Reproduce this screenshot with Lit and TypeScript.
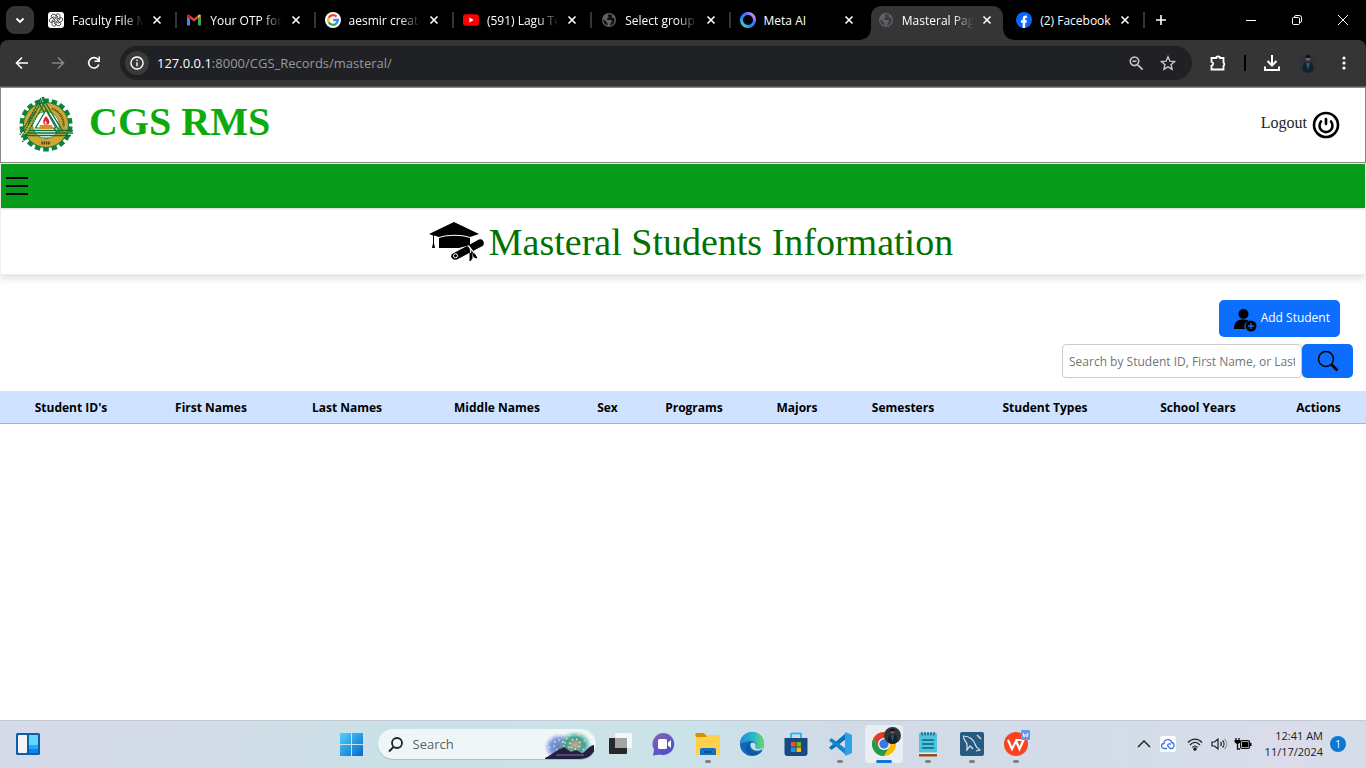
import { LitElement, html, svg, css } from "lit";
import { customElement } from "lit/decorators.js";
import { classMap } from "lit/directives/class-map.js";

const rays = (n: number) => Array.from({ length: n }, (_, i) => (i * 360) / n);

const globe = svg`<circle cx="8" cy="8" r="7" fill="#5f6368"/>
  <path d="M8 2.300c-1.500.6-1.700 1.700-.7 2.300s.2 1.500-.9 1.700c-1.200.3-.6 1.700.6 1.700h2.500c1.500.2 2 1.700.8 2.500-.9.600-.6 2-1.600 3.300 5-.6 6-6 3.800-8.200-1.300.5-2.200-.5-1.500-1.500.5-.9-.9-1.900-3-1.800zM2.200 7.600c-.1 3 1.500 5 4 5.900.6-1.700.5-2.700-.8-3.200C4.600 9.900 5 9 4.200 8.600z" fill="var(--tab-bg,#000)" opacity=".85"/>`;

const person = svg`<circle cx="10" cy="10" r="10" fill="#30343a"/>
  <path d="M4.500 17.500c-.3-5 1-8.500 4-9l1.500 1 1.500-1c3 .5 4.300 4 4 9-3 3-8 3-11 0z" fill="#12222d"/>
  <path d="M7.500 9l2.500 8 2.500-8-2.500 1z" fill="#29566a"/><circle cx="10" cy="5.500" r="2.300" fill="#80614f"/><path d="M7.300 5c0-4.500 5.400-4.500 5.400 0z" fill="#101318"/>`;

const favicons: Record<string, unknown> = {
  gpt: svg`<rect width="16" height="16" rx="3" fill="#fff"/>
    <g fill="none" stroke="#333" stroke-width=".8">${rays(6).map(a => svg`<path transform="rotate(${a} 8 8)" d="M8 6V3.600a2 2 0 0 1 4 .3v3.300L8.800 9"/>`)}</g>`,
  gmail: svg`<path d="M1 4v9.500h3V7z" fill="#4285f4"/><path d="M15 4v9.500h-3V7z" fill="#34a853"/>
    <path d="M1 4.200 8 9.600l7-5.400-1.700-1.700L8 6.400 2.700 2.500z" fill="#ea4335"/><path d="M12 6.500V3.200c1.400-1.300 3-.6 3 1.100z" fill="#fbbc04"/><path d="M4 6.500V3.200C2.600 1.900 1 2.600 1 4.300z" fill="#c5221f"/>`,
  google: svg`<circle cx="8" cy="8" r="8" fill="#fff"/><g fill="none" stroke-width="2.300">
    <path d="M11.600 4.600A4.900 4.900 0 0 0 3.700 5.700" stroke="#ea4335"/><path d="M3.700 5.700a5 5 0 0 0 0 4.600" stroke="#fbbc05"/>
    <path d="M3.700 10.300a4.900 4.900 0 0 0 7.500 1.300" stroke="#34a853"/><path d="M8.200 8h4.700a5 5 0 0 1-1.700 3.600" stroke="#4285f4"/></g>`,
  youtube: svg`<rect y="2.300" width="16" height="11.400" rx="3" fill="#f00"/><path d="M6.400 5.600v4.800L10.600 8z" fill="#fff"/>`,
  globe,
  meta: svg`<defs><linearGradient id="mt" x1="0" y1="1" x2="1" y2="0"><stop offset="0" stop-color="#5ef0c0"/><stop offset=".35" stop-color="#1789ff"/><stop offset=".65" stop-color="#5668ff"/><stop offset="1" stop-color="#f9a0e8"/></linearGradient></defs>
    <circle cx="8" cy="8" r="6.500" fill="none" stroke="url(#mt)" stroke-width="3"/>`,
  facebook: svg`<circle cx="8" cy="8" r="8" fill="#0866ff"/><path d="M6.700 16v-5.300H5V8.200h1.700V7c0-2.700 1.400-3.700 4.200-3.300v2.200C9.600 5.800 9.200 6 9.200 7v1.200h1.700l-.4 2.500H9.200V16z" fill="#fff"/>`,
};

const tabs = [
  { icon: "gpt", title: "Faculty File M", fade: true },
  { icon: "gmail", title: "Your OTP for", fade: true },
  { icon: "google", title: "aesmir creatu", fade: true },
  { icon: "youtube", title: "(591) Lagu Te", fade: true },
  { icon: "globe", title: "Select group", fade: true },
  { icon: "meta", title: "Meta AI" },
  { icon: "globe", title: "Masteral Pag", fade: true, active: true },
  { icon: "facebook", title: "(2) Facebook" },
];

const line = (size: number, d: string, w = 1.8) => html`<svg width=${size} height=${size} viewBox="0 0 ${size} ${size}" fill="none" stroke="currentColor" stroke-width=${w} aria-hidden="true"><path d=${d}/></svg>`;

@customElement("browser-chrome")
class BrowserChrome extends LitElement {
  static styles = css`
    :host { display: block; background: #000; color: #fff; font-family: "Open Sans", "Noto Sans", sans-serif; }
    button { border: 0; padding: 0; background: none; color: inherit; display: grid; place-items: center; flex: none; }
    svg { display: block; }
    .strip { display: flex; height: 40px; }
    .list { width: 28px; height: 28px; margin: 6px 5px 0 6px; border-radius: 9px; background: #353535; }
    .tabs { display: grid; grid-template-columns: repeat(8, minmax(0, 1fr)); flex: 0 1 81%; padding-top: 6px; }
    .tab { position: relative; display: flex; align-items: center; margin: 0 4px 0 2px; padding: 0 8px 6px 7px; border-radius: 10px 10px 0 0; font-size: 12px; }
    .favicon { flex: none; margin-right: 8px; }
    .title { flex: 1; min-width: 0; white-space: nowrap; }
    .title.fade { mask-image: linear-gradient(90deg, #000 70%, transparent 98%); }
    .close { width: 16px; height: 16px; margin-left: 4px; }
    .tab::after { content: ""; position: absolute; right: -4px; top: 6px; width: 2px; height: 16px; background: #353535; }
    .tab.before::after { display: none; }
    .tab.active { background: #353535; --tab-bg: #353535; }
    .tab.active::before, .tab.active::after { content: ""; position: absolute; top: auto; bottom: 0; width: 10px; height: 10px; }
    .tab.active::before { left: -10px; background: radial-gradient(circle at 0 0, transparent 9px, #353535 10px); }
    .tab.active::after { right: -10px; background: radial-gradient(circle at 100% 0, transparent 9px, #353535 10px); }
    .new { width: 32px; height: 40px; }
    .win { width: 46px; height: 40px; }
    .grow { flex: 1; }
    .bar { display: flex; align-items: center; height: 46px; background: #353535; border-radius: 8px 8px 0 0; padding: 0 4px; border-bottom: 1px solid #5b5b5b; }
    .nav { width: 36px; height: 36px; }
    .dim { color: #858585; }
    .omni { flex: 1; min-width: 0; display: flex; align-items: center; height: 34px; margin: 0 8px; padding: 0 8px 0 5px; border-radius: 17px; background: #202124; }
    .info { width: 24px; height: 24px; border-radius: 50%; background: #3a3a3b; margin-right: 8px; }
    .url { flex: 1; font-size: 13px; line-height: 20px; color: #9a9a9a; outline: none; }
    .host { color: #fff; }
    .tool { width: 32px; height: 32px; color: #c7c7c7; }
    .sep { width: 2px; height: 16px; background: #000; margin: 0 8px; }
    .ext { width: 36px; height: 36px; }
  `;
  render() {
    return html`
      <div class="strip">
        <button class="list" aria-label="Search tabs">${line(12, "M2.500 4.500 6 8l3.500-3.500")}</button>
        <div class="tabs">
          ${tabs.map((t, i) => html`<div class=${classMap({ tab: true, active: !!t.active, before: !!tabs[i + 1]?.active })}>
            <svg class="favicon" width="16" height="16" viewBox="0 0 16 16" aria-hidden="true">${favicons[t.icon]}</svg>
            <span class=${classMap({ title: true, fade: !!t.fade })}>${t.title}</span>
            <button class="close" aria-label="Close tab">${line(10, "M1.500 1.500l7 7M8.500 1.500l-7 7", 1.6)}</button>
          </div>`)}
        </div>
        <button class="new" aria-label="New tab">${line(12, "M6 1v10M1 6h10", 1.6)}</button>
        <span class="grow"></span>
        <button class="win" aria-label="Minimize">${line(10, "M0 5.500h10", 1)}</button>
        <button class="win" aria-label="Restore">${line(10, "M2.500 2.500V2A1.500 1.500 0 0 1 4 .5h3.500a2 2 0 0 1 2 2V6A1.500 1.500 0 0 1 8 7.500M1.500 2.500h5a1 1 0 0 1 1 1v5a1 1 0 0 1-1 1h-5a1 1 0 0 1-1-1v-5a1 1 0 0 1 1-1z", 1)}</button>
        <button class="win" aria-label="Close">${line(10, "M0 0l10 10M10 0 0 10", 1)}</button>
      </div>
      <div class="bar">
        <button class="nav" aria-label="Back">${line(16, "M14 8H3M8 2.500 2.500 8 8 13.500", 1.6)}</button>
        <button class="nav dim" aria-label="Forward">${line(16, "M2 8h11M8 2.500 13.500 8 8 13.500", 1.6)}</button>
        <button class="nav" aria-label="Reload">${line(16, "M12.800 9.500A5.200 5.200 0 1 1 11.700 4.300L13 5.700M13.200 1.500v4.800H8.600", 1.6)}</button>
        <div class="omni">
          <button class="info" aria-label="Site information">${line(14, "M7 1a6 6 0 1 0 .01 0zM7 6.200v4M7 3.500v1.600", 1.4)}</button>
          <div class="url" role="textbox" aria-label="Address" contenteditable="true" spellcheck="false"><span class="host">127.0.0.1</span>:8000/CGS_Records/masteral/</div>
          <button class="tool" aria-label="Zoom">${line(16, "M6.500 2a4.300 4.300 0 1 0 .01 0zM9.600 9.600l5 5M4.500 6.300h4", 1.6)}</button>
          <button class="tool" aria-label="Bookmark">${line(16, "M8 1.800l1.900 4.400 4.700.4-3.600 3.100 1.100 4.700L8 11.900l-4.100 2.500L5 9.700 1.400 6.600l4.700-.4z", 1.4)}</button>
        </div>
        <button class="ext" aria-label="Extensions">${line(18, "M2.500 4H7a2 1.500 0 0 1 4 0h3.500v4.500a1.500 2 0 0 1 0 3.500v3.500h-12v-3.800c2.200-.3 2.200-3.600 0-3.900z", 1.8)}</button>
        <span class="sep"></span>
        <button class="ext" aria-label="Downloads">${line(18, "M9 1v10M4.500 7 9 11.500 13.500 7M2 12.500V16h14v-3.500", 2)}</button>
        <button class="ext" aria-label="Profile"><svg width="20" height="20" viewBox="0 0 20 20" aria-hidden="true">${person}</svg></button>
        <button class="ext" aria-label="Menu"><svg width="16" height="16" fill="currentColor" aria-hidden="true"><circle cx="8" cy="3" r="1.600"/><circle cx="8" cy="8" r="1.600"/><circle cx="8" cy="13" r="1.600"/></svg></button>
      </div>`;
  }
}

const seal = html`<svg width="56" height="58" viewBox="0 0 56 58" aria-hidden="true">
  <g fill="#0e8239">${rays(18).map(a => svg`<rect x="25.200" y="2.500" width="5.600" height="6" transform="rotate(${a} 28 29)"/>`)}</g>
  <circle cx="28" cy="29" r="23" fill="#0e8239"/><circle cx="28" cy="29" r="22" fill="#d2a632"/>
  <circle cx="28" cy="29" r="13.500" fill="#fff" stroke="#0e8239" stroke-width=".8"/>
  <g fill="none" stroke="#4c4016" stroke-width="2.200" stroke-dasharray="1 .7"><path d="M11 28A17 17 0 0 1 18 15.500"/><path d="M34 12.500A17.500 17.500 0 0 1 45.500 31"/></g>
  <path d="M23.500 47h9" stroke="#4c4016" stroke-width="3" stroke-dasharray="1.500 .7"/>
  <path d="M22 3 42 36M24 1 45 35.500M20 6l19 31" stroke="#0e7236" stroke-width="1.400"/>
  <path d="M26 1 3 42M28 4 4.500 46M23 2 2 39" stroke="#0e7236" stroke-width="1.400" stroke-dasharray="2 .6"/>
  <path d="M11 34.500h44M9 37h46M7 39.500h46" stroke="#0e7236" stroke-width="1.500"/>
  <path d="M28 14 17.500 32h20.500z" fill="#fff" stroke="#0e7236" stroke-width="1.200"/>
  <path d="M28 20c-3 3-3.500 6-2 8.500h4.500c1.500-2 1-4-.5-6z" fill="#e3262c"/><path d="M27.500 24.500l-1 3h2.500z" fill="#fff"/><path d="M22 29h12l1 4H21z" fill="#db8a2d"/>
  <path d="M26 42h5" stroke="#555" stroke-dasharray="1 .5"/>
</svg>`;

const gradCap = html`<svg width="56" height="42" viewBox="0 0 56 42" aria-hidden="true">
  <path d="M0 13 25 1l25 12-9 3C32 13 19 13 10 16l-5-1.500V22l1 5H3l1-5v-7.500z"/>
  <path d="M10 17c9-3 22-3 31 0v7L30 27H10z"/>
  <path d="M23 33 50 18.500c4-1.500 6.500 4 3.500 6.500L28 38.500c-5 1-7-3-5-5.500z"/>
  <path d="M41 29v11l2-2.500V29zM43 29l5 8-3-1z" stroke="#000"/>
  <path d="M39.500 24.500l6 8M38.500 25c2 0 4 4 3 7" fill="none" stroke="#fff" stroke-width="1.200"/><circle cx="26.500" cy="34.800" r="2" fill="none" stroke="#fff"/>
</svg>`;

// Column shares follow the space each heading is given across the window.
const columns: [string, number][] = [
  ["Student ID's", 142], ["First Names", 138], ["Last Names", 134], ["Middle Names", 166], ["Sex", 55], ["Programs", 118],
  ["Majors", 88], ["Semesters", 124], ["Student Types", 160], ["School Years", 146], ["Actions", 95],
];
const total = columns.reduce((s, c) => s + c[1], 0);

@customElement("records-page")
class RecordsPage extends LitElement {
  static styles = css`
    :host { display: block; background: #fff; color: #000; font-family: "Open Sans", "Noto Sans", sans-serif; font-size: 12px; }
    svg { display: block; }
    .head { display: flex; align-items: center; justify-content: space-between; height: 74px; border: 1px solid #8b8585; padding: 0 25px 0 17px; font-family: "Liberation Serif", serif; }
    .brand { display: flex; align-items: center; gap: 15px; }
    .name { margin: 0; font-size: 40px; line-height: 46px; padding-bottom: 6px; color: #0aab0a; }
    .logout { display: flex; align-items: center; gap: 5px; font-size: 16px; color: #212529; text-decoration: none; }
    .word { padding-bottom: 4px; }
    .menu { display: flex; align-items: center; height: 44px; padding-left: 4px; background: #079b1b; border: 1px solid #eee8e8; }
    .burger { display: flex; padding: 0; border: 0; background: none; }
    .caption { display: flex; align-items: center; justify-content: center; gap: 4px; height: 64px; padding-left: 16px; border: 1px solid #eee; box-shadow: 0 3px 8px rgba(0,0,0,.14); font-family: "Liberation Serif", serif; }
    .caption h2 { margin: 0; font-size: 38px; line-height: 44px; font-weight: 400; color: #007000; }
    .tools { display: flex; flex-direction: column; align-items: flex-end; gap: 7px; padding: 25px 13px 13px; }
    .add { display: flex; align-items: center; gap: 4px; height: 37px; margin-right: 13px; padding: 0 10px 2px 14px; border: 0; border-radius: 5px; background: #0d6efd; color: #fff; font: inherit; }
    .add svg { margin-top: 5px; }
    .find { display: flex; }
    .query { width: 240px; height: 34px; box-sizing: border-box; border: 1px solid #ccc; border-radius: 4px; padding: 0 6px; font: inherit; }
    .query::placeholder { color: #757575; }
    .go { display: grid; place-items: center; width: 51px; height: 34px; border: 0; border-radius: 5px; padding: 0; background: #0d6efd; }
    .grid { width: 100%; table-layout: fixed; border-collapse: collapse; }
    .grid th { height: 30px; padding: 2px 0 0; background: #cfe2ff; border-bottom: 1px solid #a6b5cc; line-height: 20px; white-space: nowrap; }
  `;
  render() {
    return html`
      <header class="head">
        <div class="brand">${seal}<h1 class="name">CGS RMS</h1></div>
        <a class="logout" href="#"><span class="word">Logout</span>
          <svg width="28" height="28" viewBox="0 0 28 28" fill="none" stroke="#000" stroke-width="2.600" stroke-linecap="round" aria-hidden="true"><circle cx="14" cy="14" r="12"/><path d="M14 8v5M9 10.500a6.500 6.500 0 1 0 10 0"/></svg>
        </a>
      </header>
      <nav class="menu"><button class="burger" aria-label="Open menu"><svg width="24" height="20" stroke="#000" stroke-width="2" aria-hidden="true"><path d="M1 2h22M1 10h22M1 18h22"/></svg></button></nav>
      <div class="caption">${gradCap}<h2>Masteral Students Information</h2></div>
      <main>
        <div class="tools">
          <button class="add"><svg width="24" height="24" viewBox="0 0 24 24" aria-hidden="true"><circle cx="10.500" cy="6" r="5"/><path d="M1 21c0-7 3.500-9.500 9-9.500 2.500 0 4.500.5 6 1.500-4 1-5.500 4.500-3.800 8z"/><circle cx="18" cy="18" r="5.500"/><path d="M18 15v6M15 18h6" stroke="#0d6efd" stroke-width="1.400"/></svg>Add Student</button>
          <form class="find">
            <input class="query" type="text" aria-label="Search students" placeholder="Search by Student ID, First Name, or Last Name">
            <button class="go" type="button" aria-label="Search"><svg width="22" height="22" viewBox="0 0 22 22" fill="none" stroke="#000" aria-hidden="true"><circle cx="9" cy="9" r="7.500" stroke-width="1.500"/><path d="M14.500 14.500l6 6" stroke-width="2.600"/></svg></button>
          </form>
        </div>
        <table class="grid">
          <colgroup>${columns.map(([, w]) => html`<col style="width:${(w / total) * 100}%">`)}</colgroup>
          <thead><tr>${columns.map(([n]) => html`<th scope="col">${n}</th>`)}</tr></thead>
        </table>
      </main>`;
  }
}

const apps = [
  { name: "Task view", art: svg`<rect x="7" y="1" width="17" height="15" rx="1" fill="#f6f6f6"/><rect x="1" y="6" width="18" height="16" rx="1" fill="#282828"/><path d="M7 6h12v10H7z" fill="#a2a5a5"/>` },
  { name: "Chat", art: svg`<defs><linearGradient id="ch" x1="0" y1="0" x2=".7" y2="1"><stop stop-color="#8f62b4"/><stop offset="1" stop-color="#4b4fcb"/></linearGradient></defs><path d="M12 1a11 11 0 1 1-4 21.500L1 23.500l1-6A11 11 0 0 1 12 1z" fill="url(#ch)"/><rect x="6" y="7" width="9" height="10" rx="1.500" fill="#fff"/><path d="M16 10.500 19 8v8l-3-2.500z" fill="#fff"/>` },
  { name: "File Explorer", run: true, art: svg`<path d="M0 1.500h8l2.500 3H0z" fill="#d39100" stroke="#d39100"/><path d="M0 5h10l2-2h12v20H0z" fill="#ffd04a"/><path d="M4 23v-5q0-2 2-2h12q2 0 2 2v5z" fill="#1271c4"/><path d="M8 20h8" stroke="#0b4f93" stroke-width="2"/>` },
  { name: "Edge", art: svg`<defs><linearGradient id="ed"><stop stop-color="#2388dc"/><stop offset=".6" stop-color="#2bbcc7"/><stop offset="1" stop-color="#70da56"/></linearGradient></defs><circle cx="12" cy="12" r="12" fill="#1367ba"/><path d="M0 11C2-3 22-4 24 11c0 6-5 7-9 5 2-3 1-7-4-7-5 0-7 3-11 2z" fill="url(#ed)"/><path d="M10 11c-3 5 1 10 8 9l4-1c-6 8-18 4-15-5 .5-2 1.500-3 3-3z" fill="#1056a3"/><path d="M11 11c-2 4 2 8.500 8 7.500l3.500-1 1.500-4c-2 4-6 4-9 2.500 1.500-2 .5-5-1.500-5.500z" fill="#d0e0ea"/>` },
  { name: "Store", art: svg`<path d="M7 8V2.500q0-1 1-1h8q1 0 1 1V8" fill="none" stroke="#35b5f0" stroke-width="2"/><path d="M0.500 6h23v15q0 3-3 3h-17q-3 0-3-3z" fill="#174a83"/><path d="M7 10h4.500v4.500H7z" fill="#f25022"/><path d="M12.500 10H17v4.500h-4.500z" fill="#7fba00"/><path d="M7 15.500h4.500V20H7z" fill="#00a4ef"/><path d="M12.500 15.500H17V20h-4.500z" fill="#ffb900"/>` },
  { name: "Visual Studio Code", run: true, art: svg`<path d="M18 1 1 15.500 3.500 18 18 7z" fill="#0873b8"/><path d="M18 23 1 8.500 3.500 6 18 17z" fill="#1485ce"/><path d="M17 0l7 3v18l-7 3z" fill="#2ba3e8"/>` },
  { name: "Chrome", run: true, active: true, art: svg`<circle cx="12" cy="12" r="12" fill="#fbbc05"/><path d="M1.600 6A12 12 0 0 1 22.400 6H12L7 15z" fill="#df3c31"/><path d="M1.600 6A12 12 0 0 0 12 24l5-9-10 0z" fill="#249b4a"/><circle cx="12" cy="12" r="6" fill="#fff"/><circle cx="12" cy="12" r="4.700" fill="#3978e5"/><svg x="12" y="-5" width="17" height="17" viewBox="0 0 20 20">${person}</svg>` },
  { name: "Notepad", run: true, art: svg`<rect x="3" y="1" width="18" height="22" rx="1" fill="#4fc4df"/><path d="M3 22h18v2.500H3z" fill="#9a4c16"/><path d="M3 20.500h18V22H3z" fill="#eee"/><path d="M6 0v3.500M9 0v3.500M12 0v3.500M15 0v3.500M18 0v3.500" stroke="#126783" stroke-width="1.400"/><path d="M6 8h12M6 12h12M6 16h12" stroke="#12647d" stroke-width="1.500"/>` },
  { name: "MySQL Workbench", run: true, art: svg`<rect width="24" height="24" rx="2" fill="#275a80"/><path d="M3 4c7 0 11 4 13 10 0 2 4 3 4 4l-4 1M4 4c-2 2 2 5 3 8v6l3-4 3 3M17 3l4 4" fill="none" stroke="#dce8f0" stroke-width="1.200"/>` },
  { name: "WPS Office", run: true, art: svg`<circle cx="12" cy="12" r="12" fill="#f9431e"/><path d="M4 8l4 9 4-8 3.500 8 4-9h-8" fill="none" stroke="#fff" stroke-width="2.200"/><rect x="17" y="-2" width="9" height="10" rx="1" fill="#6795ed"/><path d="M19 1l1 4 1.500-3L23 5l1-4" fill="none" stroke="#fff"/>` },
];

@customElement("task-bar")
class TaskBar extends LitElement {
  static styles = css`
    :host { display: grid; grid-template-columns: 1fr auto 1fr; align-items: center; height: 46px; padding: 0 0 1px 1px; border-top: 1px solid #c3cad3; background: linear-gradient(90deg, #d5dae9 0, #d3dbe8 13%, #c9e1e7 30%, #cbe2e8 50%, #d1dbe8 61%, #d1dde8 82%, #dbdceb 94%, #d3dde8); color: #1a1a1a; font-family: "Open Sans", "Noto Sans", sans-serif; }
    svg { display: block; overflow: visible; }
    button { border: 0; padding: 0; background: none; color: inherit; font: inherit; }
    .widgets { margin-left: 15px; justify-self: start; }
    .center { display: flex; align-items: center; }
    .app { position: relative; display: grid; place-items: center; width: 44px; height: 40px; }
    .app.active::before { content: ""; position: absolute; inset: 1px 3px; border-radius: 4px; background: #e9eef5; }
    .app svg { position: relative; }
    .app.run::after { content: ""; position: absolute; bottom: 1px; width: 6px; height: 3px; border-radius: 2px; background: #7d8186; }
    .app.active::after { width: 16px; background: #0b78d4; }
    .search { display: flex; align-items: center; width: 218px; height: 30px; box-sizing: border-box; margin: 0 2px 0 4px; padding-left: 9px; border-radius: 15px; background: #eff6f8; box-shadow: 0 1px 1px #a9bcc5; overflow: hidden; }
    .field { flex: 1; min-width: 0; margin-left: 9px; padding: 0 0 1px; border: 0; background: none; outline: none; font: inherit; font-size: 13px; }
    .field::placeholder { color: #5a6063; }
    .tray { justify-self: end; display: flex; align-items: center; margin-right: 20px; }
    .icons, .system { display: flex; align-items: center; }
    .icons { gap: 9px; }
    .system { gap: 7px; margin: 0 13px 0 10px; }
    .clock { font-size: 11px; line-height: 16px; text-align: right; margin-right: 7px; }
    .count { display: grid; place-items: center; width: 16px; height: 16px; border-radius: 50%; background: #0b78d4; color: #fff; font-size: 10px; }
  `;
  render() {
    return html`
      <button class="widgets" aria-label="Widgets"><svg width="24" height="22" viewBox="0 0 24 22"><rect width="24" height="22" rx="1.500" fill="#0c5ead"/><rect x="2" y="2" width="9" height="18" rx="1" fill="#f2f4f7"/><path d="M13 2h9v10h-9z" fill="#65d5ff"/><path d="M13 12h9v4h-9z" fill="#21a8fa"/><path d="M13 16h9v4h-9z" fill="#0785ed"/></svg></button>
      <div class="center">
        <button class="app" aria-label="Start"><svg width="23" height="23" viewBox="0 0 23 23"><defs><linearGradient id="st" x2="1" y2="1"><stop stop-color="#4fd0fd"/><stop offset="1" stop-color="#0668cc"/></linearGradient></defs><path d="M0 0h11v11H0zM12 0h11v11H12zM0 12h11v11H0zM12 12h11v11H12z" fill="url(#st)"/></svg></button>
        <label class="search">
          <svg width="17" height="17" viewBox="0 0 17 17" fill="none" stroke="#222" stroke-width="1.800" aria-hidden="true"><circle cx="10" cy="7" r="5"/><path d="M6.500 11 2 15.500"/></svg>
          <input class="field" type="text" placeholder="Search" aria-label="Search Windows">
          <svg width="52" height="30" viewBox="0 0 52 30" aria-hidden="true"><defs>
            <radialGradient id="fa"><stop stop-color="#657fbf"/><stop offset=".6" stop-color="#809bdc"/><stop offset="1" stop-color="#a9b9ef" stop-opacity="0"/></radialGradient>
            <radialGradient id="fb"><stop stop-color="#d2a78e"/><stop offset=".55" stop-color="#3d9f95"/><stop offset="1" stop-color="#62bfae" stop-opacity="0"/></radialGradient></defs>
            <ellipse cx="15" cy="18" rx="15" ry="14" fill="url(#fa)"/><ellipse cx="31" cy="16" rx="17" ry="14" fill="url(#fb)"/>
            <g stroke="#ffe9b0" stroke-width="1" stroke-dasharray="2 3">${rays(7).map(a => svg`<path d="M15 12v-8" transform="rotate(${a} 15 16)"/>`)}${rays(7).map(a => svg`<path d="M31 11v-8" transform="rotate(${a + 20} 31 15)"/>`)}</g>
            <path d="M1 29c6-3 12-8 19-11l7 5 5-2 6 3c4-1 6-7 12-8v14H1z" fill="#252040"/><path d="M12 26h28" stroke="#806f9c"/></svg>
        </label>
        ${apps.map(a => html`<button class=${classMap({ app: true, run: !!a.run, active: !!a.active })} aria-label=${a.name}><svg width="24" height="24" viewBox="0 0 24 24">${a.art}</svg></button>`)}
      </div>
      <div class="tray">
        <div class="icons">
          ${line(14, "M1 10l6-6 6 6", 1.4)}
          <svg width="16" height="16" viewBox="0 0 16 16" aria-hidden="true"><rect width="16" height="16" rx="2" fill="#fff"/><path d="M7 12.500H4a2.500 2.500 0 0 1 0-5c0-5 7-5 7.500-1 3 0 3.500 4.500 1 6H10L7.500 9.500a2 2 0 0 1 3.500-1" fill="none" stroke="#3a78e8" stroke-width="1.300"/></svg>
        </div>
        <div class="system">
          <svg width="18" height="16" viewBox="0 0 18 16" fill="none" stroke="#222" stroke-width="1.200" aria-hidden="true"><path d="M2 6.500c4-4.500 10-4.500 14 0M4 9c3-3.500 7-3.500 10 0M6.300 11.500c1.500-2 4-2 5.400 0"/><circle cx="9" cy="13" r="1.200" fill="#222"/></svg>
          <svg width="16" height="16" viewBox="0 0 16 16" fill="none" stroke="#222" stroke-width="1.200" aria-hidden="true"><path d="M1 6h2.500L7 3v10l-3.500-3H1zM9.500 6c1 1.200 1 2.800 0 4M11.500 4.500c2 2 2 5 0 7"/><path d="M13.500 3c3 3 3 7 0 10" stroke="#999"/></svg>
          <svg width="18" height="16" viewBox="0 0 18 16" aria-hidden="true"><path d="M2 2v3M5 2v3M3.500 7v6H6" stroke="#111" stroke-width="1.300" fill="none"/><path d="M.5 4h6v2q-3 4-6 0z"/><rect x="6.600" y="4.600" width="9" height="7.800" rx="1.500" fill="none" stroke="#111" stroke-width="1.200"/><path d="M8 6h6.500v5H8zM16 7h1.500v3H16z"/></svg>
        </div>
        <div class="clock">12:41 AM<br>11/17/2024</div>
        <span class="count">1</span>
      </div>`;
  }
}

@customElement("app-root")
class AppRoot extends LitElement {
  static styles = css`
    :host { display: flex; flex-direction: column; min-height: 100vh; background: #fff; }
    .page { flex: 1; }
  `;
  render() {
    return html`<browser-chrome></browser-chrome><records-page class="page"></records-page><task-bar></task-bar>`;
  }
}
